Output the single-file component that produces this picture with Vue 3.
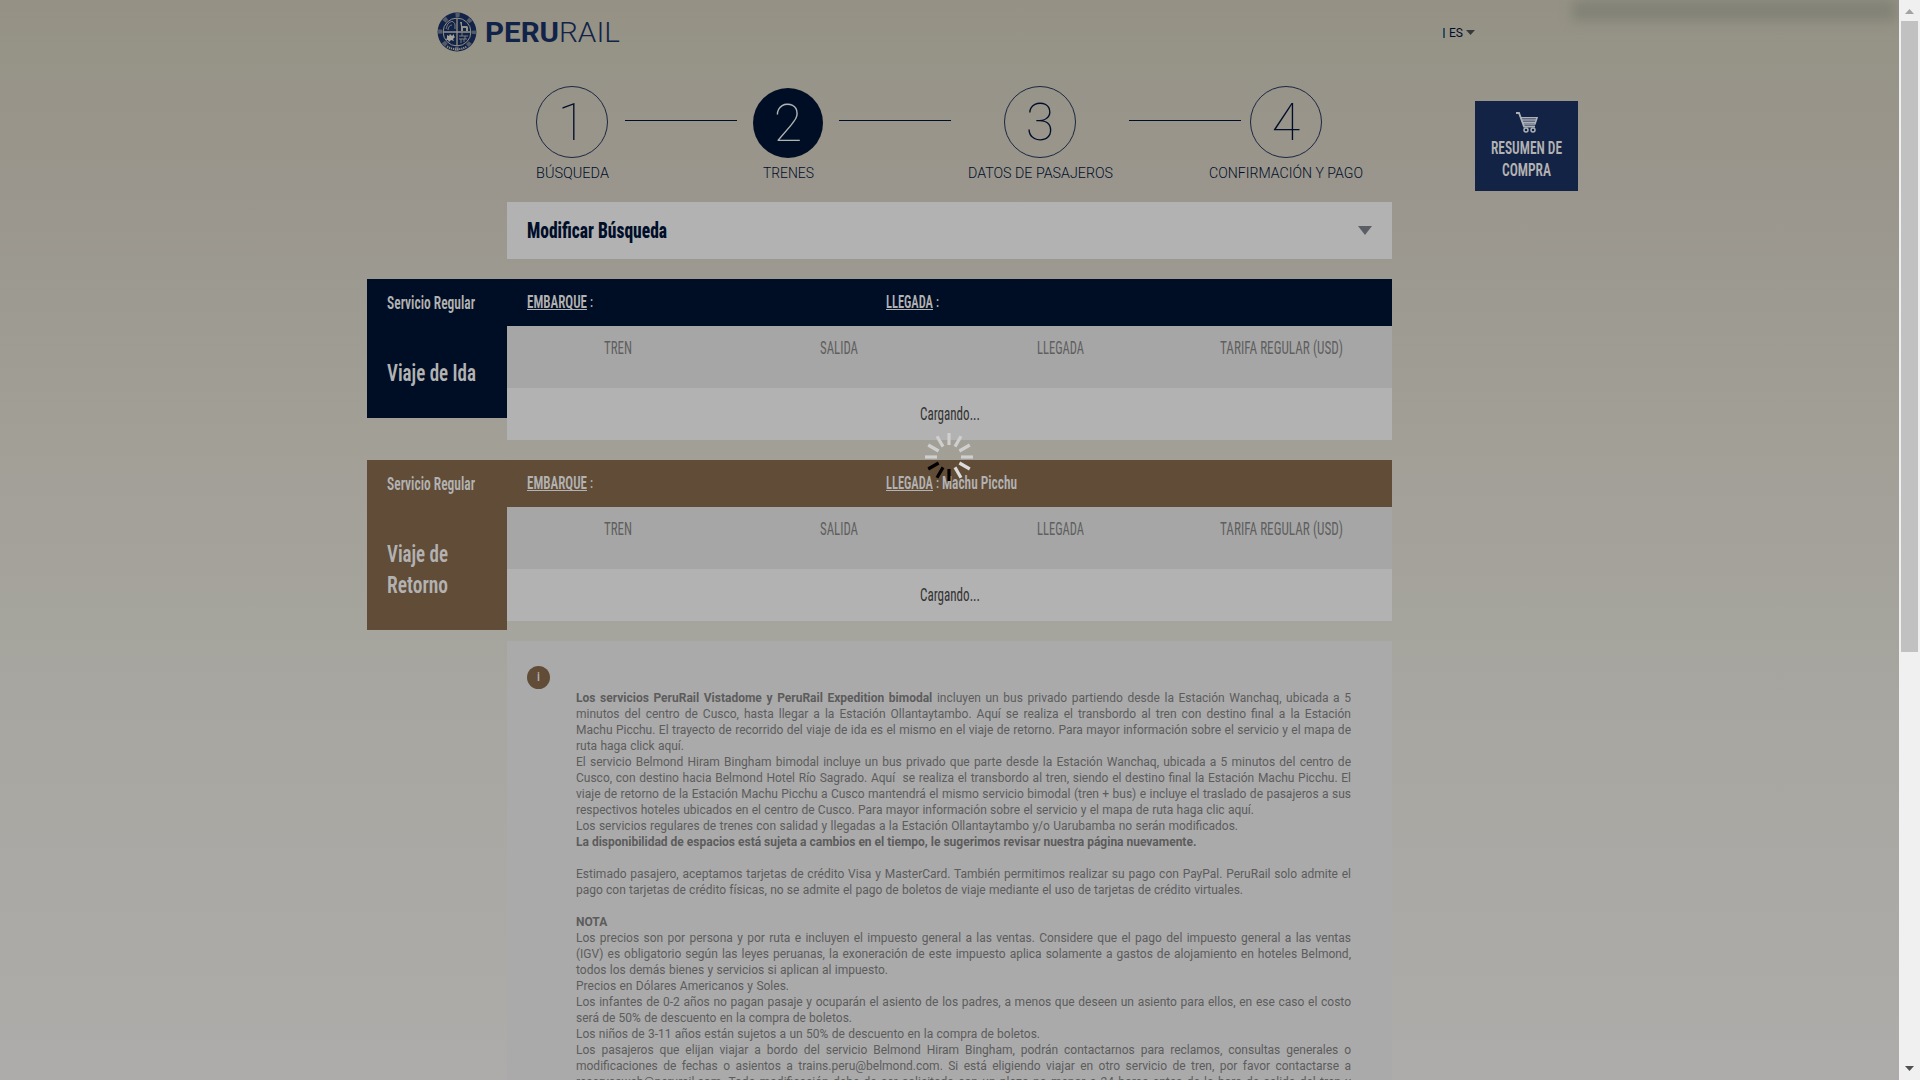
<script setup>
import { h } from 'vue'

// Condensed label: real text fitted to a given width
const Fit = (p) =>
  h(
    'svg',
    { width: p.w, height: p.lh, style: { display: 'block', overflow: 'visible', flex: 'none' } },
    [
      h(
        'text',
        {
          x: 0,
          y: p.base,
          textLength: p.w,
          lengthAdjust: 'spacingAndGlyphs',
          fill: 'currentColor',
          'font-size': p.size,
          'font-weight': p.weight || 400,
        },
        p.text
      ),
    ]
  )
Fit.props = ['w', 'lh', 'base', 'size', 'weight', 'text']

const steps = [
  { n: 1, label: 'BÚSQUEDA', w: 73, before: 0, after: 17 },
  { n: 2, label: 'TRENES', w: 51, before: 15, after: 15, active: true },
  { n: 3, label: 'DATOS DE PASAJEROS', w: 145, before: 53, after: 53 },
  { n: 4, label: 'CONFIRMACIÓN Y PAGO', w: 154, before: 9, after: 0 },
]

const columns = [
  { t: 'TREN', w: 28 },
  { t: 'SALIDA', w: 38 },
  { t: 'LLEGADA', w: 47 },
  { t: 'TARIFA REGULAR (USD)', w: 123 },
]

const trips = [
  { kind: 'ida', title: [{ t: 'Viaje de Ida', w: 89 }], arrival: '' },
  {
    kind: 'retorno',
    title: [
      { t: 'Viaje de', w: 61 },
      { t: 'Retorno', w: 61 },
    ],
    arrival: 'Machu Picchu',
  },
]

const full = 775
const notes = [
  { b: 'Los servicios PeruRail Vistadome y PeruRail Expedition bimodal', t: ' incluyen un bus privado partiendo desde la Estación Wanchaq, ubicada a 5', w: full },
  { t: 'minutos del centro de Cusco, hasta llegar a la Estación Ollantaytambo. Aquí se realiza el transbordo al tren con destino final a la Estación', w: full },
  { t: 'Machu Picchu. El trayecto de recorrido del viaje de ida es el mismo en el viaje de retorno. Para mayor información sobre el servicio y el mapa de', w: full },
  { t: 'ruta haga click aquí.', w: 108 },
  { t: 'El servicio Belmond Hiram Bingham bimodal incluye un bus privado que parte desde la Estación Wanchaq, ubicada a 5 minutos del centro de', w: full },
  { t: 'Cusco, con destino hacia Belmond Hotel Río Sagrado. Aquí \u00a0se realiza el transbordo al tren, siendo el destino final la Estación Machu Picchu. El', w: full },
  { t: 'viaje de retorno de la Estación Machu Picchu a Cusco mantendrá el mismo servicio bimodal (tren + bus) e incluye el traslado de pasajeros a sus', w: full },
  { t: 'respectivos hoteles ubicados en el centro de Cusco. Para mayor información sobre el servicio y el mapa de ruta haga clic aquí.', w: 678 },
  { t: 'Los servicios regulares de trenes con salidad y llegadas a la Estación Ollantaytambo y/o Uarubamba no serán modificados.', w: 662 },
  { b: 'La disponibilidad de espacios está sujeta a cambios en el tiempo, le sugerimos revisar nuestra página nuevamente.', w: 619 },
  {},
  { t: 'Estimado pasajero, aceptamos tarjetas de crédito Visa y MasterCard. También permitimos realizar su pago con PayPal. PeruRail solo admite el', w: full },
  { t: 'pago con tarjetas de crédito físicas, no se admite el pago de boletos de viaje mediante el uso de tarjetas de crédito virtuales.', w: 667 },
  {},
  { b: 'NOTA', w: 31 },
  { t: 'Los precios son por persona y por ruta e incluyen el impuesto general a las ventas. Considere que el pago del impuesto general a las ventas', w: full },
  { t: '(IGV) es obligatorio según las leyes peruanas, la exoneración de este impuesto aplica solamente a gastos de alojamiento en hoteles Belmond,', w: full },
  { t: 'todos los demás bienes y servicios si aplican al impuesto.', w: 312 },
  { t: 'Precios en Dólares Americanos y Soles.', w: 213 },
  { t: 'Los infantes de 0-2 años no pagan pasaje y ocuparán el asiento de los padres, a menos que deseen un asiento para ellos, en ese caso el costo', w: full },
  { t: 'será de 50% de descuento en la compra de boletos.', w: 276 },
  { t: 'Los niños de 3-11 años están sujetos a un 50% de descuento en la compra de boletos.', w: 464 },
  { t: 'Los pasajeros que elijan viajar a bordo del servicio Belmond Hiram Bingham, podrán contactarnos para reclamos, consultas generales o', w: full },
  { t: 'modificaciones de fechas o asientos a trains.peru@belmond.com. Si está eligiendo viajar en otro servicio de tren, por favor contactarse a', w: full },
  { t: 'reservasweb@perurail.com. Toda modificación debe de ser solicitada con un plazo no menor a 24 horas antes de la hora de salida del tren y', w: full },
]

const rays = Array.from({ length: 12 }, (_, i) => ({
  a: i * 30,
  c: i >= 6 && i <= 8 ? '#000' : i > 3 && i < 6 ? '#dcdcdc' : '#cfcfcf',
}))
</script>

<template>
  <div class="window">
    <div class="page">
      <div class="glow"></div>
      <header class="header">
        <svg class="seal" width="40" height="40" viewBox="-20 -20 40 40">
          <circle r="19.4" fill="#122349" />
          <circle r="16.9" fill="none" stroke="#8d8b82" stroke-width="4" stroke-dasharray="4.2 9.07" stroke-dashoffset="2" opacity=".55" />
          <circle r="13.9" fill="#122349" stroke="#959286" stroke-width="1" />
          <path d="M0-14V14M-14 0H14" stroke="#959286" stroke-width="1.3" />
          <path d="M-11-3c1-2 1-5 3-6 1-2 2 0 3-2 1 2 3 1 3 4v4M-9-2c0-3 2-5 4-5" fill="none" stroke="#959286" stroke-width=".8" />
          <path d="M3-10h2v4h5l1 1v4H9v-3H6v3H4v-5z" fill="#959286" />
          <path d="M-10 3l2 1 1-2 2 2 2-2v2l1 1-2 2 1 2-3-1-2 2-1-2-2 0 1-2z" fill="#a5a399" />
          <path d="M2 4h9M2 7h8M5 1v3M8 4v3M4 7v4M7 7v3" stroke="#959286" stroke-width=".8" />
          <path d="M-10 14.5Q0 20 10 14.5" fill="none" stroke="#8d8b82" stroke-width="2" stroke-dasharray="1.3 .8" />
        </svg>
        <div class="brand">
          <Fit :w="74" :lh="40" :base="30" :size="28.5" :weight="700" text="PERU" />
          <Fit :w="61" :lh="40" :base="30" :size="28.5" :weight="300" text="RAIL" />
        </div>
        <div class="lang">
          <i></i>
          <Fit :w="14" :lh="16" :base="12" :size="13" text="ES" />
          <svg width="9" height="5" viewBox="0 0 9 5"><path d="M0 0h9L4.500 5z" fill="#38393d" /></svg>
        </div>
      </header>

      <nav class="steps">
        <template v-for="(s, i) in steps" :key="s.n">
          <div class="step" :class="{ active: s.active }" :style="{ marginLeft: s.before + 'px', marginRight: s.after + 'px' }">
            <div class="circle">{{ s.n }}</div>
            <Fit :w="s.w" :lh="22" :base="19.500" :size="14" :weight="350" :text="s.label" />
          </div>
          <div v-if="i < 3" class="line"></div>
        </template>
      </nav>

      <aside class="summary">
        <svg width="22" height="21" viewBox="0 0 22 21" fill="none" stroke="#aeb1b8" stroke-width="1.500">
          <path d="M0 1h3l5 13.500h11" stroke-width="1.800" />
          <path d="M4.500 5.800h16.500l-2 6.200H7" />
          <path d="M5.500 8h14.800M6.500 10.200h13" />
          <circle cx="10" cy="18" r="2" /><circle cx="17" cy="18" r="2" />
        </svg>
        <Fit :w="71" :lh="22" :base="18" :size="18" :weight="600" text="RESUMEN DE" />
        <Fit :w="49" :lh="22" :base="18" :size="18" :weight="600" text="COMPRA" />
      </aside>

      <main class="content">
        <section class="modify">
          <Fit :w="140" :lh="57" :base="36" :size="22.5" :weight="800" text="Modificar Búsqueda" />
          <svg width="14" height="9" viewBox="0 0 14 9"><path d="M0 0h14L7 9z" fill="#5b5e65" /></svg>
        </section>

        <section v-for="t in trips" :key="t.kind" class="trip" :class="t.kind">
          <div class="side">
            <Fit :w="88" :lh="24" :base="16" :size="17.5" :weight="600" text="Servicio Regular" />
            <div class="title">
              <Fit v-for="l in t.title" :key="l.t" :w="l.w" :lh="31" :base="23" :size="24.5" :weight="600" :text="l.t" />
            </div>
          </div>
          <div class="board">
            <div class="route">
              <div class="end">
                <span class="u"><Fit :w="60" :lh="17" :base="15" :size="18" :weight="600" text="EMBARQUE" /></span>
                <Fit :w="3" :lh="17" :base="14" :size="14" :weight="500" text=":" />
              </div>
              <div class="end">
                <span class="u"><Fit :w="47" :lh="17" :base="15" :size="18" :weight="600" text="LLEGADA" /></span>
                <Fit :w="3" :lh="17" :base="14" :size="14" :weight="500" text=":" />
                <Fit v-if="t.arrival" :w="75" :lh="17" :base="15" :size="18" :weight="600" :text="t.arrival" />
              </div>
            </div>
            <div class="heads">
              <div v-for="c in columns" :key="c.t"><Fit :w="c.w" :lh="62" :base="28" :size="18.5" :text="c.t" /></div>
            </div>
            <div class="loading"><Fit :w="60" :lh="52" :base="32" :size="18" text="Cargando..." /></div>
          </div>
        </section>

        <section class="info">
          <div class="badge">i</div>
          <div class="notes">
            <p v-for="(n, i) in notes" :key="i" :style="{ width: (n.w || full) + 'px' }"><b v-if="n.b">{{ n.b }}</b>{{ n.t }}</p>
          </div>
        </section>
      </main>

      <svg class="spinner" width="50" height="50" viewBox="-25 -25 50 50">
        <path v-for="r in rays" :key="r.a" d="M0-12V-24" :stroke="r.c" stroke-width="3.200" :transform="`rotate(${r.a})`" />
      </svg>
    </div>

    <div class="scrollbar">
      <svg width="9" height="5" viewBox="0 0 9 5"><path d="M0 5h9L4.500 0z" fill="#a3a3a3" /></svg>
      <div class="thumb"></div>
      <svg class="down" width="9" height="5" viewBox="0 0 9 5"><path d="M0 0h9L4.500 5z" fill="#505050" /></svg>
    </div>
  </div>
</template>

<style>
body {
  margin: 0;
  overflow: hidden;
}
</style>

<style scoped>
.window {
  display: flex;
  width: 1920px;
  height: 1080px;
  overflow: hidden;
  font-family: Roboto, 'Liberation Sans', sans-serif;
  font-stretch: 75%;
}
.page {
  position: relative;
  width: 1899px;
  height: 1080px;
  overflow: hidden;
  background: linear-gradient(#959285 0, #9a968d 190px, #a19f96 440px, #a7a6a0 700px, #adacaa 1080px);
}
.glow {
  position: absolute;
  left: 1572px;
  top: 0;
  width: 324px;
  height: 21px;
  background: #828276;
  filter: blur(6px);
}
.header {
  display: flex;
  box-sizing: border-box;
  height: 86px;
  padding: 12px 0 0 437px;
  font-stretch: 100%;
}
.seal {
  flex: none;
}
.brand {
  display: flex;
  width: 142px;
  box-sizing: border-box;
  padding-left: 8px;
  color: #122349;
}
.lang {
  display: flex;
  height: 9px;
  margin: 16px 0 0 824px;
  color: #000e2a;
}
.lang i {
  width: 2px;
  height: 10px;
  margin-right: 4px;
  background: #31505f;
}
.lang svg:first-of-type {
  margin-top: -3px;
}
.lang svg:last-child {
  margin: 2px 0 0 3px;
}
.steps {
  display: flex;
  height: 116px;
  padding-left: 536px;
  font-stretch: 100%;
}
.step {
  display: flex;
  flex: none;
  flex-direction: column;
  align-items: center;
  width: 72px;
  color: #000e2a;
}
.circle {
  box-sizing: border-box;
  width: 72px;
  height: 72px;
  border: 1px solid #1b2740;
  border-radius: 50%;
  font-size: 52px;
  font-weight: 100;
  line-height: 71px;
  text-align: center;
}
.active .circle {
  width: 70px;
  height: 70px;
  margin-top: 2px;
  border: 0;
  background: #000e25;
  color: #b2b2b2;
}
.line {
  flex: none;
  width: 112px;
  height: 1px;
  margin-top: 34px;
  background: #000e2a;
}
.summary {
  position: absolute;
  left: 1475px;
  top: 101px;
  display: flex;
  flex-direction: column;
  align-items: center;
  box-sizing: border-box;
  width: 103px;
  height: 90px;
  padding-top: 11px;
  background: #132345;
  color: #b2b2b2;
}
.summary > svg:first-child {
  margin-bottom: 3px;
}
.content {
  display: flex;
  flex-direction: column;
  width: 1025px;
  margin-left: 367px;
}
.modify {
  display: flex;
  justify-content: space-between;
  height: 57px;
  margin: 0 0 20px 140px;
  padding: 0 20px;
  background: #b2b2b2;
  color: #000e2a;
}
.modify svg:last-child {
  margin-top: 24px;
}
.trip {
  display: flex;
  align-items: flex-start;
  height: 181px;
}
.ida {
  --tone: #000e25;
}
.retorno {
  --tone: #614c37;
}
.side {
  box-sizing: border-box;
  width: 140px;
  padding: 14px 20px 29px;
  background: var(--tone);
  color: #b2b2b2;
}
.title {
  padding-top: 41px;
}
.board {
  width: 885px;
}
.route {
  display: flex;
  height: 47px;
  padding-left: 20px;
  background: var(--tone);
  color: #b2b2b2;
}
.end {
  display: flex;
  gap: 3px;
  width: 359px;
  padding-top: 14px;
}
.u {
  height: 16px;
  border-bottom: 1px solid #b2b2b2;
}
.heads {
  display: grid;
  grid-template-columns: repeat(4, 1fr);
  justify-items: center;
  height: 62px;
  background: #a6a6a6;
  color: #5f5f5f;
}
.loading {
  display: flex;
  justify-content: center;
  height: 52px;
  background: #b2b2b2;
  color: #333;
}
.info {
  display: flex;
  height: 460px;
  margin-left: 140px;
  padding-left: 20px;
  background: #aaa;
}
.badge {
  width: 23px;
  height: 23px;
  margin-top: 25px;
  border-radius: 50%;
  background: #614c37;
  color: #b2b2b2;
  font-size: 12px;
  font-weight: 500;
  line-height: 23px;
  text-align: center;
}
.notes {
  margin: 49px 0 0 26px;
  color: #5c5c5c;
  font-size: 12px;
  font-stretch: 100%;
  line-height: 16px;
}
.notes p {
  height: 16px;
  margin: 0;
  text-align: justify;
  text-align-last: justify;
  white-space: nowrap;
}
.spinner {
  position: absolute;
  left: 924px;
  top: 432px;
}
.scrollbar {
  display: flex;
  flex-direction: column;
  align-items: center;
  box-sizing: border-box;
  width: 21px;
  padding: 9px 0 9px;
  background: #f0f0f0;
}
.thumb {
  width: 17px;
  height: 631px;
  margin-top: 7px;
  background: #c1c1c1;
}
.down {
  margin-top: auto;
}
</style>
